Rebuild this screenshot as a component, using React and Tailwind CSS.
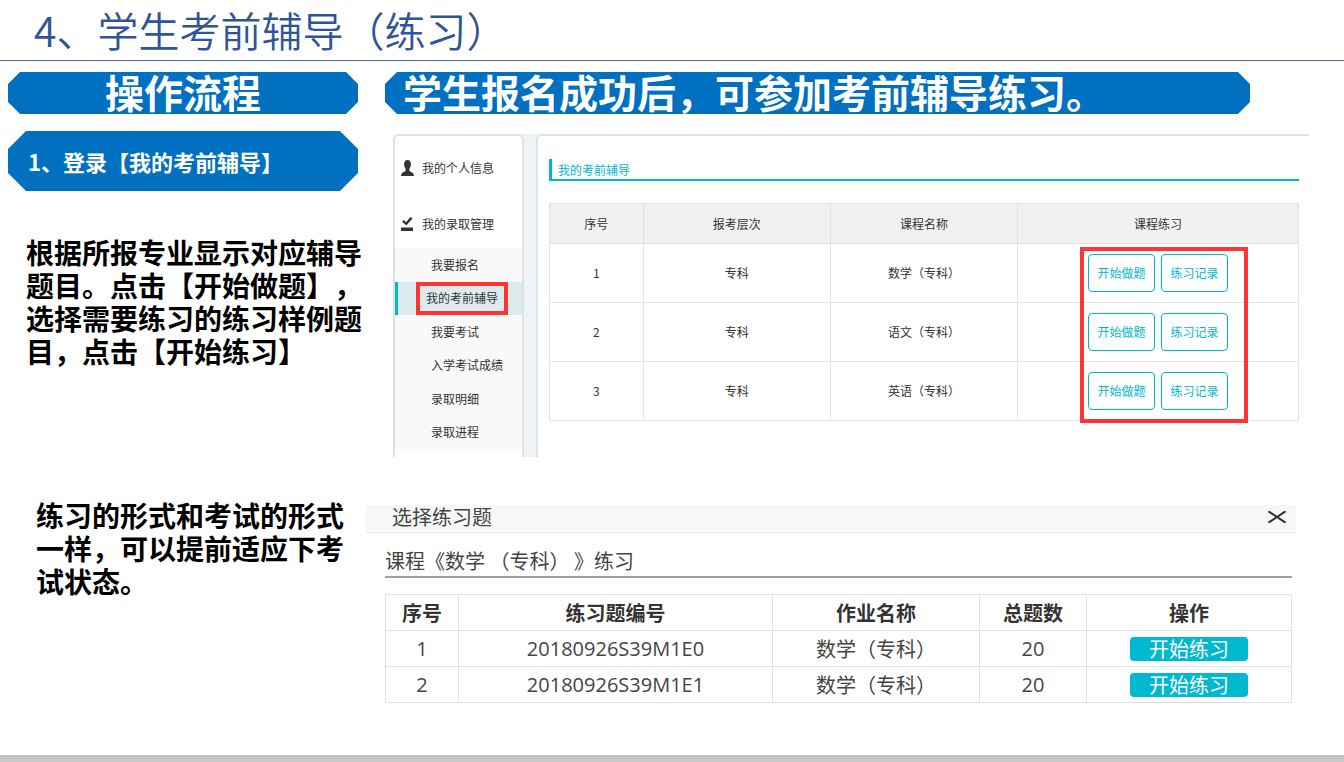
import { X } from "lucide-react";

const subMenu = ["我要报名", "我的考前辅导", "我要考试", "入学考试成绩", "录取明细", "录取进程"];

const courses = [
  { id: 1, level: "专科", name: "数学（专科）" },
  { id: 2, level: "专科", name: "语文（专科）" },
  { id: 3, level: "专科", name: "英语（专科）" }
];

const exercises = [
  { id: 1, code: "20180926S39M1E0", name: "数学（专科）", total: 20 },
  { id: 2, code: "20180926S39M1E1", name: "数学（专科）", total: 20 }
];

export default function App() {
  return (
    <div className="flex min-h-screen flex-col bg-white font-['Noto_Sans_CJK_SC',sans-serif] [text-spacing-trim:space-all]">
      <header className="border-b border-[#4a6bab] pl-[34px]">
        <h1 className="pb-[2px] text-[41px] leading-[58px] font-[350] text-[#2f5597]">4、学生考前辅导（练习）</h1>
      </header>

      <main className="flex-1">
        {/* Banners */}
        <div className="flex gap-[27px] pt-[11px] pr-[94px] pl-2">
          <Banner className="w-[350px] text-center">操作流程</Banner>
          <Banner className="flex-1 pl-[18px]">学生报名成功后，可参加考前辅导练习。</Banner>
        </div>

        {/* Step 1 */}
        <section className="flex pr-[35px]">
          <div className="w-[393px] shrink-0 pt-[17px] pl-2">
            <h3 className="w-[350px] bg-[#0070c0] pl-5 text-[22px] leading-[60px] font-bold text-white [clip-path:polygon(18px_0,calc(100%-18px)_0,100%_18px,100%_calc(100%-18px),calc(100%-18px)_100%,18px_100%,0_calc(100%-18px),0_18px)]">
              1、登录【我的考前辅导】
            </h3>
            <p className="mt-[45px] ml-[18px] w-[340px] text-[28px] leading-[33px] font-bold text-black">
              根据所报专业显示对应辅导题目。点击【开始做题】，选择需要练习的练习样例题目，点击【开始练习】
            </p>
          </div>
          <StudentPanel />
        </section>

        {/* Step 2 */}
        <section className="flex pt-[42px] pr-[50px]">
          <p className="w-[366px] shrink-0 pr-5 pl-9 text-[28px] leading-[33px] font-bold text-black">
            练习的形式和考试的形式一样，可以提前适应下考试状态。
          </p>
          <ExerciseDialog />
        </section>
      </main>

      <footer className="h-[7px] bg-linear-to-b from-[#bdbdbd] to-[#cccccc]" />
    </div>
  );
}

function Banner({ className, children }) {
  return (
    <h2
      className={`bg-[#0070c0] pb-[3px] text-[39px] leading-[39px] font-bold text-white [clip-path:polygon(12px_0,calc(100%-12px)_0,100%_12px,100%_calc(100%-12px),calc(100%-12px)_100%,12px_100%,0_calc(100%-12px),0_12px)] ${className}`}
    >
      {children}
    </h2>
  );
}

/* Student centre: side menu and course table */
function StudentPanel() {
  return (
    <div className="mt-5 flex h-[323px] flex-1 gap-3 bg-[#eff4f8] text-xs text-[#333]">
      <nav className="w-[131px] rounded-t-md border-x-2 border-t-2 border-[#dde2e4] bg-white">
        <a href="#info" className="mt-3 flex h-10 items-center gap-2 pl-[6px]">
          <UserIcon />
          我的个人信息
        </a>
        <a href="#admission" className="mt-4 flex h-10 items-center gap-2 pl-[6px]">
          <CheckIcon />
          我的录取管理
        </a>
        <ul className="mt-1 grid h-[201px] grid-rows-6 bg-[#f9f9f9]">
          {subMenu.map(item =>
            item === "我的考前辅导" ? (
              <li key={item} className="flex border-l-3 border-[#00b8ce] bg-[#dcebed] pl-[18px]">
                <a href="#tutoring" className="flex items-center border-4 border-[#ff3535] px-[6px]">
                  {item}
                </a>
              </li>
            ) : (
              <li key={item} className="flex items-center pl-9">
                <a href="#menu">{item}</a>
              </li>
            )
          )}
        </ul>
      </nav>

      <div className="flex-1 rounded-tl-md border-t-2 border-l-2 border-[#dde2e4] bg-white pt-[23px] pr-[10px] pl-[11px]">
        <h4 className="h-[22px] border-b-2 border-l-3 border-[#00b8ce] pl-[6px] text-xs leading-[22px] text-[#00b8ce]">
          我的考前辅导
        </h4>
        <div className="relative mt-[22px]">
          <table className="w-full table-fixed border-collapse text-center">
            <thead>
              <tr className="h-10 bg-[#f1f1f1]">
                <th className="w-1/8 border border-[#e0e0e0] font-normal">序号</th>
                <th className="w-1/4 border border-[#e0e0e0] font-normal">报考层次</th>
                <th className="w-1/4 border border-[#e0e0e0] font-normal">课程名称</th>
                <th className="w-3/8 border border-[#e0e0e0] font-normal">课程练习</th>
              </tr>
            </thead>
            <tbody>
              {courses.map(c => (
                <tr key={c.id} className="h-[59px]">
                  <td className="border border-[#e6e6e6]">{c.id}</td>
                  <td className="border border-[#e6e6e6]">{c.level}</td>
                  <td className="border border-[#e6e6e6]">{c.name}</td>
                  <td className="border border-[#e6e6e6]">
                    <div className="flex justify-center gap-[6px]">
                      <OutlineButton>开始做题</OutlineButton>
                      <OutlineButton>练习记录</OutlineButton>
                    </div>
                  </td>
                </tr>
              ))}
            </tbody>
          </table>
          {/* highlight around the action buttons */}
          <div className="pointer-events-none absolute top-11 right-[51px] -bottom-[2px] w-[168px] border-4 border-[#ff3535]" />
        </div>
      </div>
    </div>
  );
}

function OutlineButton({ children }) {
  return (
    <button className="h-[38px] w-[67px] rounded border border-[#00b8ce] bg-white text-xs text-[#00b8ce]">
      {children}
    </button>
  );
}

/* Dialog for choosing an exercise */
function ExerciseDialog() {
  return (
    <div className="mt-[6px] flex-1 text-xl text-[#444]">
      <div className="flex h-7 items-center justify-between border-b border-[#ebebeb] bg-[#f7f7f7] pr-[10px] pb-1 pl-[26px]">
        <h4 className="leading-5">选择练习题</h4>
        <button aria-label="关闭" className="text-[#333]">
          <X className="h-3 w-[18px]" preserveAspectRatio="none" viewBox="5 5 14 14" strokeWidth={2} />
        </button>
      </div>
      <div className="pr-1 pl-[19px]">
        <p className="mt-4 border-b-2 border-[#a0a0a0] pb-1 leading-[23px]">课程《数学 （专科） 》练习</p>
        <table className="mt-4 w-full table-fixed border-collapse text-center">
          <thead>
            <tr className="h-9 leading-6 text-[#333]">
              <th className="w-[73px] border border-[#e2e2e2]">序号</th>
              <th className="w-[314px] border border-[#e2e2e2]">练习题编号</th>
              <th className="w-[207px] border border-[#e2e2e2]">作业名称</th>
              <th className="w-[107px] border border-[#e2e2e2]">总题数</th>
              <th className="w-[205px] border border-[#e2e2e2]">操作</th>
            </tr>
          </thead>
          <tbody>
            {exercises.map(e => (
              <tr key={e.id} className="h-9 leading-6">
                <td className="border border-[#e2e2e2] font-['Open_Sans']">{e.id}</td>
                <td className="border border-[#e2e2e2] font-['Open_Sans']">{e.code}</td>
                <td className="border border-[#e2e2e2]">{e.name}</td>
                <td className="border border-[#e2e2e2] font-['Open_Sans']">{e.total}</td>
                <td className="border border-[#e2e2e2]">
                  <button className="mx-auto block h-6 w-[118px] rounded bg-[#00b8d0] leading-6 text-white">
                    开始练习
                  </button>
                </td>
              </tr>
            ))}
          </tbody>
        </table>
      </div>
    </div>
  );
}

function UserIcon() {
  return (
    <svg viewBox="0 0 13 16" className="h-4 w-[13px] fill-[#333]">
      <path d="M6.5 0C4.200 0 3 1.800 3.100 4.200C3.200 6.400 3.800 7.800 4.600 8.800V10.800C4 11.800 1.300 12 .5 14L0 16H13L12.500 14C11.700 12 9 11.800 8.400 10.800V8.800C9.200 7.800 9.800 6.400 9.900 4.200C10 1.800 8.800 0 6.500 0Z" />
    </svg>
  );
}

function CheckIcon() {
  return (
    <svg viewBox="0 0 13 14" className="h-[14px] w-[13px] fill-[#333]">
      <path d="M1 4.500L3 3L5 5.200L9.500 0L11.500 1.500L5.300 8.500Z" />
      <path d="M0 10.500H12V14H0Z" />
    </svg>
  );
}
